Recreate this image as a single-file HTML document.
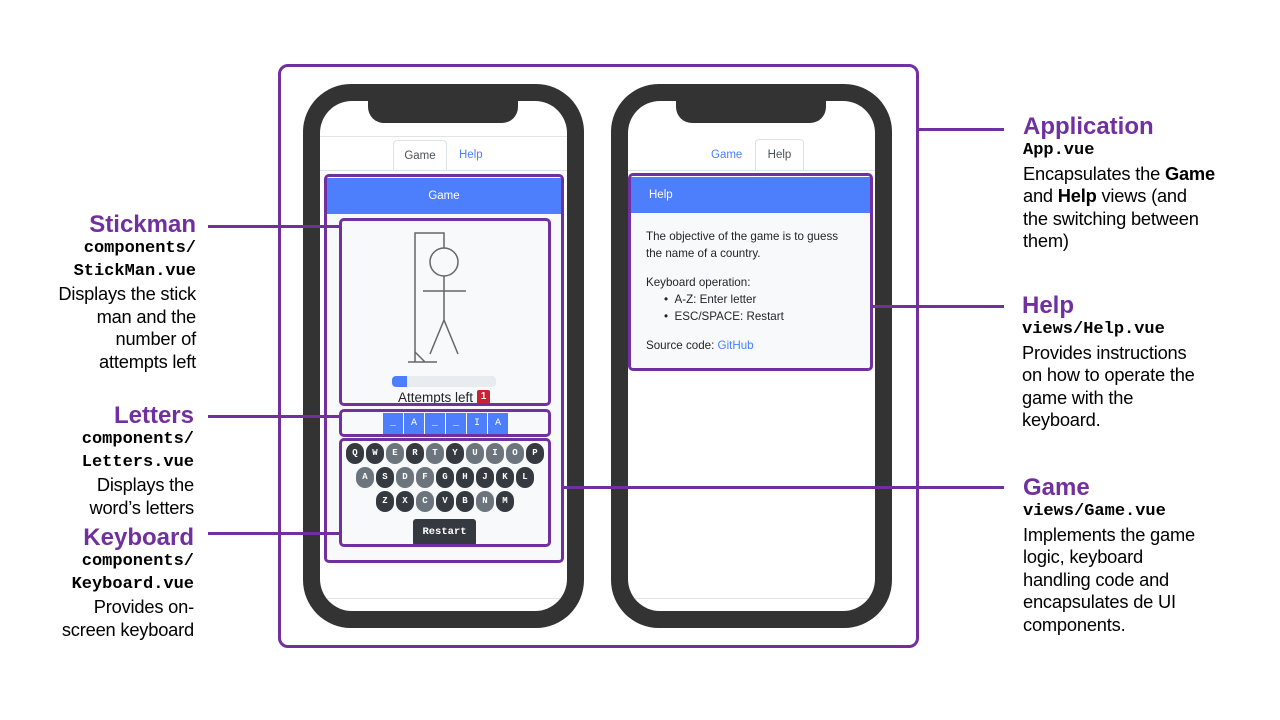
<!DOCTYPE html>
<html><head><meta charset="utf-8"><style>
*{margin:0;padding:0;box-sizing:border-box}
body{width:1280px;height:720px;background:#fff;position:relative;overflow:hidden;font-family:"Liberation Sans",sans-serif;color:#000}
.a{position:absolute}
.pb{position:absolute;border:3px solid #7030a0;border-radius:5px}
.ln{position:absolute;height:3px;background:#7030a0}
.phone{position:absolute;width:281px;height:544px;background:#333;border-radius:48px}
.screen{position:absolute;left:17px;top:17px;width:247px;height:510px;background:#fff;border-radius:32px;overflow:hidden}
.notch{position:absolute;left:48px;top:-2px;width:150px;height:24px;background:#333;border-radius:0 0 16px 16px}
.t{position:absolute;font-size:18.3px;line-height:22.5px;white-space:nowrap;letter-spacing:-0.2px}
.ttl{font-weight:bold;color:#7030a0;font-size:24px;line-height:26px;letter-spacing:0}
.code{font-family:"Liberation Mono",monospace;font-weight:bold;font-size:17px;letter-spacing:0}
.r{text-align:right}
.key{position:absolute;width:18px;height:21px;border-radius:9px;color:#fff;font-family:"Liberation Mono",monospace;font-weight:bold;font-size:9px;line-height:21px;text-align:center}
.d{background:#343a40}.g{background:#6c757d}
.lt{position:absolute;top:413px;width:20px;height:21px;background:#4d7efc;color:#fff;font-family:"Liberation Mono",monospace;font-size:10px;line-height:21px;text-align:center}
.sm{font-size:11.6px;color:#212529}
</style></head><body>

<div class="a" style="left:278px;top:64px;width:641px;height:584px;border:3px solid #7030a0;border-radius:10px"></div>

<div class="phone" style="left:303px;top:84px">
 <div class="screen">
  <div class="notch"></div>
  <div class="a" style="left:0;top:35px;width:247px;height:1px;background:#e3e3e3"></div>
  <div class="a" style="left:73px;top:39px;width:54px;height:31px;border:1px solid #dee2e6;border-bottom:none;border-radius:4px 4px 0 0;background:#fff;font-size:11.5px;color:#495057;text-align:center;line-height:31px">Game</div>
  <div class="a" style="left:139px;top:39px;font-size:11.5px;color:#4d7efc;line-height:31px">Help</div>
  <div class="a" style="left:0;top:69px;width:247px;height:1px;background:#dee2e6"></div>
  <div class="a" style="left:7px;top:76px;width:234px;height:386px;background:#f8f9fa"></div>
  <div class="a" style="left:7px;top:77px;width:234px;height:36px;background:#4d7efc;color:#fff;font-size:11.5px;text-align:center;line-height:36px">Game</div>
  <div class="a" style="left:0;top:497px;width:247px;height:1px;background:#e3e3e3"></div>
 </div>
</div>

<svg class="a" style="left:0;top:0" width="1280" height="720">
 <g stroke="#666" stroke-width="1.5" fill="none">
  <path d="M415 362V233H444V248"/>
  <circle cx="444" cy="262" r="14"/>
  <path d="M444 276V320M423 291H466M444 320L430 354M444 320L458 354M408 362H437M415 352L425 362"/>
 </g>
</svg>
<div class="a" style="left:392px;top:376px;width:104px;height:11px;background:#e9ecef;border-radius:4px;overflow:hidden"><div style="width:15px;height:11px;background:#4d7efc"></div></div>
<div class="a" style="left:398px;top:389px;font-size:13.5px;line-height:17px;color:#212529">Attempts left</div>
<div class="a" style="left:477px;top:390px;width:13px;height:14px;background:#c82333;border-radius:2px;color:#fff;font-size:10px;font-weight:bold;text-align:center;line-height:14px">1</div>

<div class="lt" style="left:383px">_</div>
<div class="lt" style="left:404px">A</div>
<div class="lt" style="left:425px">_</div>
<div class="lt" style="left:446px">_</div>
<div class="lt" style="left:467px">I</div>
<div class="lt" style="left:488px">A</div>

<div class="key d" style="left:346px;top:443px">Q</div><div class="key d" style="left:366px;top:443px">W</div><div class="key g" style="left:386px;top:443px">E</div><div class="key d" style="left:406px;top:443px">R</div><div class="key g" style="left:426px;top:443px">T</div><div class="key d" style="left:446px;top:443px">Y</div><div class="key g" style="left:466px;top:443px">U</div><div class="key g" style="left:486px;top:443px">I</div><div class="key g" style="left:506px;top:443px">O</div><div class="key d" style="left:526px;top:443px">P</div>
<div class="key g" style="left:356px;top:467px">A</div><div class="key d" style="left:376px;top:467px">S</div><div class="key g" style="left:396px;top:467px">D</div><div class="key g" style="left:416px;top:467px">F</div><div class="key d" style="left:436px;top:467px">G</div><div class="key d" style="left:456px;top:467px">H</div><div class="key d" style="left:476px;top:467px">J</div><div class="key d" style="left:496px;top:467px">K</div><div class="key d" style="left:516px;top:467px">L</div>
<div class="key d" style="left:376px;top:491px">Z</div><div class="key d" style="left:396px;top:491px">X</div><div class="key g" style="left:416px;top:491px">C</div><div class="key d" style="left:436px;top:491px">V</div><div class="key d" style="left:456px;top:491px">B</div><div class="key g" style="left:476px;top:491px">N</div><div class="key d" style="left:496px;top:491px">M</div>
<div class="a" style="left:413px;top:519px;width:63px;height:27px;background:#343a40;border-radius:3px;color:#fff;font-family:'Liberation Mono',monospace;font-weight:bold;font-size:10.5px;text-align:center;line-height:27px">Restart</div>

<div class="phone" style="left:611px;top:84px">
 <div class="screen">
  <div class="notch"></div>
  <div class="a" style="left:83px;top:39px;font-size:11.5px;color:#4d7efc;line-height:31px">Game</div>
  <div class="a" style="left:127px;top:38px;width:49px;height:32px;border:1px solid #dee2e6;border-bottom:none;border-radius:4px 4px 0 0;background:#fff;font-size:11.5px;color:#495057;text-align:center;line-height:31px">Help</div>
  <div class="a" style="left:0;top:69px;width:247px;height:1px;background:#dee2e6"></div>
  <div class="a" style="left:3px;top:76px;width:240px;height:192px;background:#f8f9fa"></div>
  <div class="a" style="left:3px;top:76px;width:240px;height:36px;background:#4d7efc;color:#fff;font-size:11.5px;padding-left:18px;line-height:36px">Help</div>
  <div class="a sm" style="left:18px;top:127px;line-height:17px">The objective of the game is to guess<br>the name of a country.</div>
  <div class="a sm" style="left:18px;top:173px;line-height:17px">Keyboard operation:</div>
  <div class="a sm" style="left:36px;top:190px;line-height:17px">•&nbsp;&nbsp;A-Z: Enter letter<br>•&nbsp;&nbsp;ESC/SPACE: Restart</div>
  <div class="a sm" style="left:18px;top:236px;line-height:17px">Source code: <span style="color:#4d7efc">GitHub</span></div>
  <div class="a" style="left:0;top:497px;width:247px;height:1px;background:#e3e3e3"></div>
 </div>
</div>

<div class="pb" style="left:324px;top:174px;width:240px;height:389px"></div>
<div class="pb" style="left:339px;top:218px;width:212px;height:188px"></div>
<div class="pb" style="left:339px;top:409px;width:212px;height:28px"></div>
<div class="pb" style="left:339px;top:438px;width:212px;height:109px"></div>
<div class="pb" style="left:628px;top:173px;width:245px;height:198px"></div>

<div class="ln" style="left:208px;top:225px;width:133px"></div>
<div class="ln" style="left:208px;top:415px;width:133px"></div>
<div class="ln" style="left:208px;top:532px;width:133px"></div>
<div class="ln" style="left:918px;top:128px;width:86px"></div>
<div class="ln" style="left:872px;top:305px;width:132px"></div>
<div class="ln" style="left:563px;top:486px;width:441px"></div>

<div class="t r" style="right:1084px;top:212px;width:220px"><div class="ttl">Stickman</div><div class="code">components/</div><div class="code">StickMan.vue</div>Displays the stick<br>man and the<br>number of<br>attempts left</div>
<div class="t r" style="right:1086px;top:403px;width:220px"><div class="ttl">Letters</div><div class="code">components/</div><div class="code">Letters.vue</div>Displays the<br>word’s letters</div>
<div class="t r" style="right:1086px;top:525px;width:220px"><div class="ttl">Keyboard</div><div class="code">components/</div><div class="code">Keyboard.vue</div>Provides on-<br>screen keyboard</div>

<div class="t" style="left:1023px;top:114px"><div class="ttl">Application</div><div class="code">App.vue</div>Encapsulates the <b>Game</b><br>and <b>Help</b> views (and<br>the switching between<br>them)</div>
<div class="t" style="left:1022px;top:293px"><div class="ttl">Help</div><div class="code">views/Help.vue</div>Provides instructions<br>on how to operate the<br>game with the<br>keyboard.</div>
<div class="t" style="left:1023px;top:475px"><div class="ttl">Game</div><div class="code">views/Game.vue</div>Implements the game<br>logic, keyboard<br>handling code and<br>encapsulates de UI<br>components.</div>

</body></html>
